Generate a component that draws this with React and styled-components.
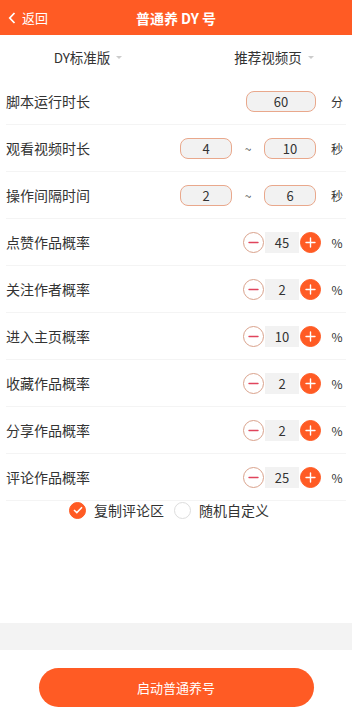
import { styled, createGlobalStyle } from "styled-components";

const GlobalStyle = createGlobalStyle`
  html, body {
    margin: 0;
    padding: 0;
    background: #fff;
  }
  body {
    font-family: "Noto Sans CJK SC", "Noto Sans", sans-serif;
    color: #333;
  }
`;

const ORANGE = "#ff5b24";

const Page = styled.div`
  width: 352px;
  height: 721px;
  display: flex;
  flex-direction: column;
  background: #fff;
`;

const Header = styled.div`
  height: 35px;
  background: ${ORANGE};
  display: flex;
  align-items: center;
  position: relative;
  color: #fff;

  .back {
    display: flex;
    align-items: center;
    gap: 6px;
    padding-left: 8px;
    font-size: 13px;
  }

  .title {
    position: absolute;
    left: 0;
    right: 0;
    text-align: center;
    font-size: 14px;
    font-weight: bold;
    pointer-events: none;
  }
`;

const Tabs = styled.div`
  height: 43px;
  display: flex;

  .tab {
    flex: 0 0 50%;
    box-sizing: border-box;
    display: flex;
    align-items: center;
    justify-content: center;
    gap: 6px;
    font-size: 13.5px;
    color: #333;
  }

  .tab + .tab {
    padding-left: 20px;
  }

  .caret {
    width: 0;
    height: 0;
    border-left: 3px solid transparent;
    border-right: 3px solid transparent;
    border-top: 3px solid #ccc;
    margin-top: 2px;
  }
`;

const Row = styled.div`
  height: 46px;
  margin: 0 6px;
  border-bottom: 1px solid #f4f4f4;
  display: flex;
  align-items: center;
  justify-content: space-between;

  .label {
    font-size: 14px;
    color: #333;
  }

  .controls {
    display: flex;
    align-items: center;
  }

  .unit {
    width: 14px;
    margin-left: ${({ $stepper }) => ($stepper ? 9 : 14)}px;
    margin-right: 2px;
    font-size: 12px;
    color: #333;
    text-align: center;
  }

  .tilde {
    width: 32px;
    text-align: center;
    font-size: 12px;
    color: #555;
  }
`;

const Field = styled.div`
  width: ${({ $w }) => $w}px;
  height: 21px;
  box-sizing: border-box;
  border: 1px solid #e9a88c;
  border-radius: 8px;
  background: #f2f2f2;
  display: flex;
  align-items: center;
  justify-content: center;
  font-size: 13px;
  color: #333;
`;

const Circle = styled.div`
  width: 21px;
  height: 21px;
  box-sizing: border-box;
  border-radius: 50%;
  display: flex;
  align-items: center;
  justify-content: center;
  border: 1px solid ${({ $filled }) => ($filled ? ORANGE : "#d9a28c")};
  background: ${({ $filled }) => ($filled ? ORANGE : "#fff")};
`;

const Value = styled.div`
  width: 34px;
  height: 21px;
  margin: 0 1px;
  background: #f2f2f2;
  display: flex;
  align-items: center;
  justify-content: center;
  font-size: 13px;
  color: #333;
`;

const Checks = styled.div`
  height: 22px;
  margin-top: -2px;
  display: flex;
  align-items: center;
  justify-content: center;
  gap: 10px;
  padding-right: 14px;

  .item {
    display: flex;
    align-items: center;
    gap: 8px;
    font-size: 14px;
    color: #333;
  }
`;

const Radio = styled.div`
  width: 17px;
  height: 17px;
  box-sizing: border-box;
  border-radius: 50%;
  display: flex;
  align-items: center;
  justify-content: center;
  background: ${({ $on }) => ($on ? ORANGE : "#fff")};
  border: 1px solid ${({ $on }) => ($on ? ORANGE : "#ddd")};
`;

const Band = styled.div`
  height: 27px;
  background: #f3f3f3;
  margin-top: auto;
`;

const Footer = styled.div`
  height: 71px;
  display: flex;
  justify-content: center;
  padding-top: 18px;
  box-sizing: border-box;
`;

const StartButton = styled.button`
  width: 275px;
  height: 39px;
  border: none;
  border-radius: 20px;
  background: ${ORANGE};
  color: #fff;
  font-family: inherit;
  font-size: 13px;
`;

const Minus = () => (
  <svg width="11" height="11" viewBox="0 0 11 11">
    <path d="M1 5.5h9" stroke="#e0445c" strokeWidth="1.4" strokeLinecap="round" />
  </svg>
);

const Plus = () => (
  <svg width="11" height="11" viewBox="0 0 11 11">
    <path d="M1 5.5h9M5.5 1v9" stroke="#fff" strokeWidth="1.4" strokeLinecap="round" />
  </svg>
);

const rates = [
  ["点赞作品概率", 45],
  ["关注作者概率", 2],
  ["进入主页概率", 10],
  ["收藏作品概率", 2],
  ["分享作品概率", 2],
  ["评论作品概率", 25],
];

const App = () => {
  return (
    <Page>
      <GlobalStyle />
      <Header>
        <div className="back">
          <svg width="8" height="12" viewBox="0 0 8 12">
            <path d="M6.5 1L1.8 6l4.7 5" fill="none" stroke="#fff" strokeWidth="1.8" />
          </svg>
          <span>返回</span>
        </div>
        <div className="title">普通养 DY 号</div>
      </Header>

      <Tabs>
        <div className="tab">
          DY标准版<span className="caret" />
        </div>
        <div className="tab">
          推荐视频页<span className="caret" />
        </div>
      </Tabs>

      <Row>
        <span className="label">脚本运行时长</span>
        <div className="controls">
          <Field $w={70}>60</Field>
          <span className="unit">分</span>
        </div>
      </Row>
      <Row>
        <span className="label">观看视频时长</span>
        <div className="controls">
          <Field $w={52}>4</Field>
          <span className="tilde">~</span>
          <Field $w={52}>10</Field>
          <span className="unit">秒</span>
        </div>
      </Row>
      <Row>
        <span className="label">操作间隔时间</span>
        <div className="controls">
          <Field $w={52}>2</Field>
          <span className="tilde">~</span>
          <Field $w={52}>6</Field>
          <span className="unit">秒</span>
        </div>
      </Row>

      {rates.map(([label, v]) => (
        <Row key={label} $stepper>
          <span className="label">{label}</span>
          <div className="controls">
            <Circle>
              <Minus />
            </Circle>
            <Value>{v}</Value>
            <Circle $filled>
              <Plus />
            </Circle>
            <span className="unit">%</span>
          </div>
        </Row>
      ))}

      <Checks>
        <div className="item">
          <Radio $on>
            <svg width="10" height="8" viewBox="0 0 10 8">
              <path d="M1 4l2.8 2.6L9 1.3" fill="none" stroke="#fff" strokeWidth="1.5" />
            </svg>
          </Radio>
          复制评论区
        </div>
        <div className="item">
          <Radio />
          随机自定义
        </div>
      </Checks>

      <Band />
      <Footer>
        <StartButton>启动普通养号</StartButton>
      </Footer>
    </Page>
  );
};

export default App;
